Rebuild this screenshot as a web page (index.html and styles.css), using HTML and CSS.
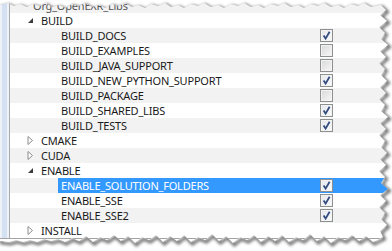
FILE: index.html
```html
<!DOCTYPE html>
<html lang="en">
<head>
    <meta charset="UTF-8">
    <title>CMake options</title>
    <link rel="stylesheet" href="styles.css">
</head>
<body>
    <div class="window">
        <div class="gutter"></div>
        <div class="tree">
            <div class="row partial"><span class="indent top"></span><div class="cell"><span class="name">Org_OpenEXR_Libs</span></div></div>

            <div class="row"><span class="indent top"><svg class="exp" width="7" height="7" viewBox="0 0 7 7"><path d="M6 1V6H1Z" fill="#3c3c3c"/></svg></span><div class="cell group"><span class="name">BUILD</span></div></div>
            <div class="row"><span class="indent child"></span><div class="cell"><span class="name">BUILD_DOCS</span><span class="box on"></span></div></div>
            <div class="row"><span class="indent child"></span><div class="cell"><span class="name">BUILD_EXAMPLES</span><span class="box"></span></div></div>
            <div class="row"><span class="indent child"></span><div class="cell"><span class="name">BUILD_JAVA_SUPPORT</span><span class="box"></span></div></div>
            <div class="row"><span class="indent child"></span><div class="cell"><span class="name">BUILD_NEW_PYTHON_SUPPORT</span><span class="box on"></span></div></div>
            <div class="row"><span class="indent child"></span><div class="cell"><span class="name">BUILD_PACKAGE</span><span class="box"></span></div></div>
            <div class="row"><span class="indent child"></span><div class="cell"><span class="name">BUILD_SHARED_LIBS</span><span class="box on"></span></div></div>
            <div class="row"><span class="indent child"></span><div class="cell"><span class="name">BUILD_TESTS</span><span class="box on"></span></div></div>

            <div class="row"><span class="indent top"><svg class="exp" width="7" height="9" viewBox="0 0 7 9"><path d="M1 .5L5.5 4.5L1 8.5Z" fill="#fff" stroke="#8c8c8c"/></svg></span><div class="cell group"><span class="name">CMAKE</span></div></div>
            <div class="row"><span class="indent top"><svg class="exp" width="7" height="9" viewBox="0 0 7 9"><path d="M1 .5L5.5 4.5L1 8.5Z" fill="#fff" stroke="#8c8c8c"/></svg></span><div class="cell group"><span class="name">CUDA</span></div></div>

            <div class="row"><span class="indent top"><svg class="exp" width="7" height="7" viewBox="0 0 7 7"><path d="M6 1V6H1Z" fill="#3c3c3c"/></svg></span><div class="cell group"><span class="name">ENABLE</span></div></div>
            <div class="row selected"><span class="indent child"></span><div class="cell"><span class="name">ENABLE_SOLUTION_FOLDERS</span><span class="box on"></span></div></div>
            <div class="row"><span class="indent child"></span><div class="cell"><span class="name">ENABLE_SSE</span><span class="box on"></span></div></div>
            <div class="row"><span class="indent child"></span><div class="cell"><span class="name">ENABLE_SSE2</span><span class="box on"></span></div></div>

            <div class="row"><span class="indent top"><svg class="exp" width="7" height="9" viewBox="0 0 7 9"><path d="M1 .5L5.5 4.5L1 8.5Z" fill="#fff" stroke="#8c8c8c"/></svg></span><div class="cell group"><span class="name">INSTALL</span></div></div>
        </div>
    </div>

    <!-- torn paper edge over the screenshot -->
    <svg class="torn" width="392" height="251" viewBox="0 0 392 251">
        <defs>
            <clipPath id="outside">
                <path clip-rule="evenodd" d="M0 0H392V251H0Z M0 5L8 3L14 6L20 4L27 7L33 4L40 6L46 3L52 7L59 5L66 8L72 4L79 6L85 3L92 7L99 5L105 8L112 4L118 6L125 3L132 7L138 5L145 8L151 4L158 6L165 3L171 7L178 5L184 8L191 4L198 6L204 3L211 7L218 5L224 8L231 4L238 6L244 3L251 7L258 5L264 8L271 4L278 6L284 3L291 7L298 5L304 8L311 4L318 6L324 3L331 7L338 5L344 8L351 4L358 6L364 3L371 7L381 5L386 10L380 15L387 21L379 27L385 33L381 39L388 45L380 51L386 57L379 63L385 69L381 75L387 81L380 87L386 93L379 99L385 105L381 111L388 117L380 123L386 129L379 135L385 141L381 147L387 153L380 159L386 165L379 171L385 177L381 183L388 189L380 195L386 201L379 207L385 213L381 219L387 225L380 231L383 237L373 242L366 236L359 241L352 235L345 240L338 237L331 243L324 236L317 241L310 234L303 240L296 237L289 242L282 235L275 241L268 236L261 242L254 235L247 240L240 237L233 243L226 236L219 241L212 234L205 240L198 237L191 242L184 235L177 241L170 236L163 242L156 235L149 240L142 237L135 243L128 236L121 241L114 235L107 240L100 237L93 242L86 236L79 241L72 238L65 242L58 239L51 241L44 239L37 242L30 240L23 242L16 240L9 242L0 241Z"/>
            </clipPath>
            <filter id="blur" x="-5%" y="-5%" width="110%" height="110%">
                <feGaussianBlur stdDeviation="1.4"/>
            </filter>
        </defs>
        <g clip-path="url(#outside)">
            <rect width="392" height="251" fill="#fff"/>
            <polygon class="edge" filter="url(#blur)" transform="translate(1.5 2)" fill="none" stroke="#6f6f6f" stroke-width="3" points="0,5 8,3 14,6 20,4 27,7 33,4 40,6 46,3 52,7 59,5 66,8 72,4 79,6 85,3 92,7 99,5 105,8 112,4 118,6 125,3 132,7 138,5 145,8 151,4 158,6 165,3 171,7 178,5 184,8 191,4 198,6 204,3 211,7 218,5 224,8 231,4 238,6 244,3 251,7 258,5 264,8 271,4 278,6 284,3 291,7 298,5 304,8 311,4 318,6 324,3 331,7 338,5 344,8 351,4 358,6 364,3 371,7 381,5 386,10 380,15 387,21 379,27 385,33 381,39 388,45 380,51 386,57 379,63 385,69 381,75 387,81 380,87 386,93 379,99 385,105 381,111 388,117 380,123 386,129 379,135 385,141 381,147 387,153 380,159 386,165 379,171 385,177 381,183 388,189 380,195 386,201 379,207 385,213 381,219 387,225 380,231 383,237 373,242 366,236 359,241 352,235 345,240 338,237 331,243 324,236 317,241 310,234 303,240 296,237 289,242 282,235 275,241 268,236 261,242 254,235 247,240 240,237 233,243 226,236 219,241 212,234 205,240 198,237 191,242 184,235 177,241 170,236 163,242 156,235 149,240 142,237 135,243 128,236 121,241 114,235 107,240 100,237 93,242 86,236 79,241 72,238 65,242 58,239 51,241 44,239 37,242 30,240 23,242 16,240 9,242 0,241"/>
        </g>
    </svg>
</body>
</html>
```

FILE: styles.css
```css
body {
    margin: 0;
    width: 392px;
    height: 251px;
    overflow: hidden;
    background-color: #fff;
    font-family: "Noto Sans", "Open Sans", sans-serif;
    font-size: 11px;
    letter-spacing: -0.2px;
    color: #1a1a1a;
}

.window {
    display: flex;
    height: 238px;
    border-bottom: 1px solid #a3a3a3;
    overflow: hidden;
}

.gutter {
    flex: none;
    width: 9px;
    background: linear-gradient(to right, #eef1f5 0 2px, #d3e1f3 2px 7px, #eef3fa 7px 9px);
    border-right: 1px solid #a9a9a9;
}

.tree {
    flex: 1;
    margin-top: -2px;
}

.row {
    display: flex;
    height: 15px;
    line-height: 15px;
}

.row:nth-child(odd) {
    background-color: #f2f2f2;
}

.indent {
    flex: none;
    display: flex;
    align-items: center;
}

.indent.top {
    width: 17px;
}

.indent.child {
    width: 48px;
}

.exp {
    margin-left: auto;
    margin-right: -7px;
}

.cell {
    flex: 1;
    display: flex;
    align-items: center;
    padding-left: 3px;
    padding-right: 59px;
}

.cell.group {
    padding-left: 14px;
}

.partial .cell {
    padding-left: 6px;
    color: #555;
}

.name {
    flex: 1;
    white-space: nowrap;
}

.selected .cell {
    background-color: #3399ff;
    color: #fff;
}

.box {
    flex: none;
    width: 11px;
    height: 11px;
    border: 1px solid #8e8f8f;
    background: linear-gradient(135deg, #d9d9d9, #f7f7f7);
    box-shadow: inset 0 0 0 1px #f3f3f3;
}

.box.on {
    background-image: url("data:image/svg+xml,%3Csvg xmlns='http://www.w3.org/2000/svg' width='11' height='11'%3E%3Cpath d='M2.6 5.6L4.6 8.6L8.6 1.8' fill='none' stroke='%23324c7f' stroke-width='1.8'/%3E%3C/svg%3E"), linear-gradient(135deg, #e4e7ec, #fbfbfc);
}

.torn {
    position: absolute;
    left: 0;
    top: 0;
}
```
